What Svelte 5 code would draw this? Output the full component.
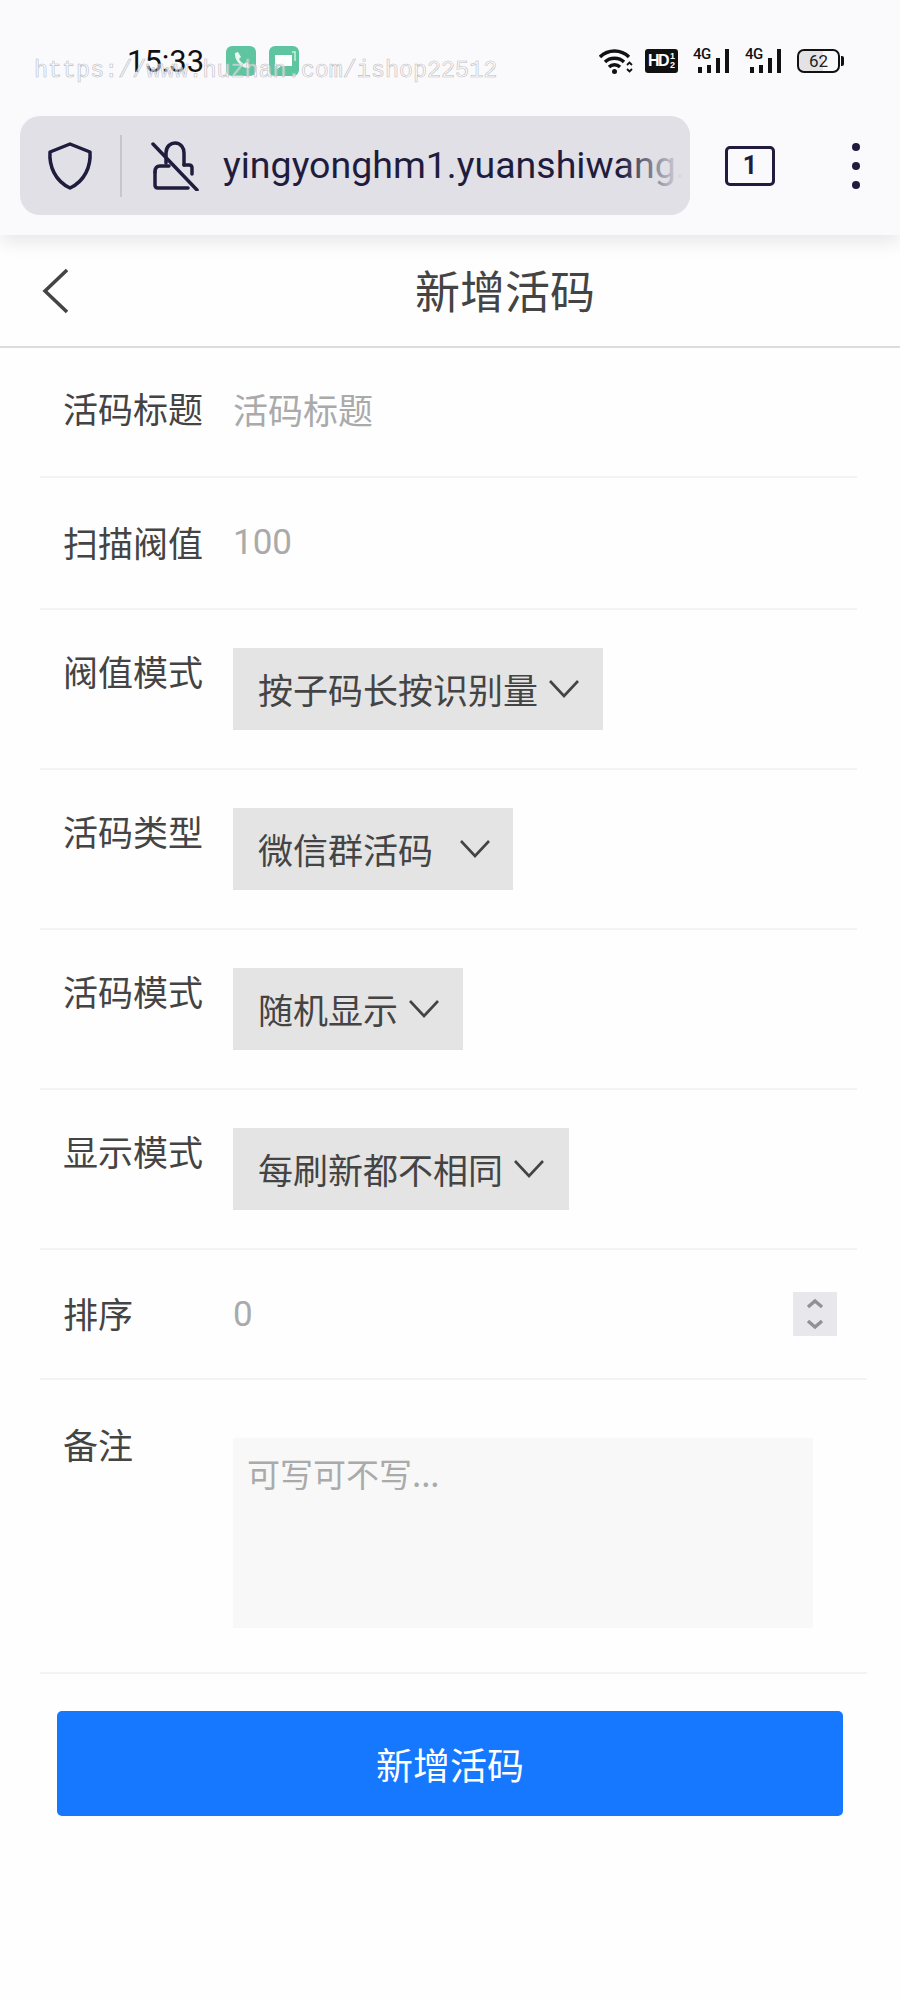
<script>
	const selects = [
		{ label: '阀值模式', value: '按子码长按识别量', width: 370, gap: 11 },
		{ label: '活码类型', value: '微信群活码', width: 280, gap: 27 },
		{ label: '活码模式', value: '随机显示', width: 230, gap: 11 },
		{ label: '显示模式', value: '每刷新都不相同', width: 336, gap: 11 }
	];
	const signals = [0, 1];
</script>

<div class="page">
	<div class="watermark">https://www.huzhan.com/ishop22512</div>

	<div class="browser">
		<div class="status">
			<span class="time">15:33</span>
			<svg class="app" viewBox="0 0 30 30">
				<rect width="30" height="30" rx="6" fill="#5fc5a0" />
				<path d="M9 7l3-1 3 5-2 2c1 2 3 4 5 5l2-2 4 3-1 3c-7 1-15-8-14-15z" fill="#e9f8f2" />
			</svg>
			<svg class="app second" viewBox="0 0 30 30">
				<rect width="30" height="30" rx="6" fill="#5fc5a0" />
				<path d="M6 9h17v11H12l-4 3v-3H6z" fill="#fff" />
				<path d="M23 6h3v9" fill="none" stroke="#c9efe0" stroke-width="1.5" />
			</svg>
			<div class="status-right">
				<svg class="wifi" viewBox="0 0 34 26" fill="none" stroke="#111" stroke-width="3.4">
					<path d="M1 9c8-8 21-8 29 0" />
					<path d="M6 14c5-5 14-5 19 0" />
					<path d="M10 19c3-3 8-3 11 0" />
					<circle cx="15.5" cy="23.5" r="2.5" fill="#111" stroke="none" />
					<path d="M28 17l2.500-2.500 2.500 2.500M28 21l2.500 2.500 2.500-2.500" stroke-width="1.8" />
				</svg>
				<span class="hd">HD<small>1<br />2</small></span>
				{#each signals as s}
					<span class="signal">
						<span class="net">4G</span>
						<svg viewBox="0 0 37 26" width="37" height="26" fill="#111">
							<rect x="5" y="19" width="4" height="6" />
							<rect x="14" y="17" width="4" height="8" />
							<rect x="23" y="10" width="4" height="15" />
							<rect x="32" y="1" width="4" height="24" />
						</svg>
					</span>
				{/each}
				<span class="battery"><span class="level">62</span></span>
			</div>
		</div>

		<div class="toolbar">
			<div class="urlbar">
				<svg class="shield" viewBox="0 0 46 50" fill="none" stroke="#1f1c3d" stroke-width="3.5" stroke-linejoin="round">
					<path d="M23 3l20 8c1 14-5 29-20 36C8 40 2 25 3 11z" />
				</svg>
				<span class="sep"></span>
				<svg class="lock" viewBox="0 0 48 50" fill="none" stroke="#1f1c3d" stroke-width="3.5" stroke-linejoin="round" stroke-linecap="round">
					<path d="M15 22V12C15 5 20 2 24 2c6 0 9 5 9 10v12" />
					<path d="M33 24h5c2 0 3 1 3 3v6" />
					<path d="M4 31v13c0 2 1 3 3 3h30" />
					<path d="M4 31c0-4 2-6 5-6h9" />
					<path d="M2 3l44 46" />
				</svg>
				<span class="url">yingyonghm1.yuanshiwang.</span>
			</div>
			<span class="tabs">1</span>
			<div class="dots"><i></i><i></i><i></i></div>
		</div>
	</div>

	<header>
		<svg class="back" viewBox="0 0 26 46" fill="none" stroke="#444" stroke-width="3.500">
			<path d="M25 2L3 23l22 21" />
		</svg>
		<h1>新增活码</h1>
	</header>

	<form on:submit|preventDefault>
		<div class="row text first">
			<span class="label">活码标题</span>
			<span class="hint">活码标题</span>
		</div>
		<div class="row text second-row">
			<span class="label">扫描阀值</span>
			<span class="hint num">100</span>
		</div>

		{#each selects as item}
			<div class="row pick">
				<span class="label">{item.label}</span>
				<div class="select" style="width: {item.width}px">
					<span>{item.value}</span>
					<svg viewBox="0 0 30 18" width="30" height="18" style="margin-left: {item.gap}px" fill="none" stroke="#444" stroke-width="2.6">
						<path d="M1 1l14 15L29 1" />
					</svg>
				</div>
			</div>
		{/each}

		<div class="row text order">
			<span class="label">排序</span>
			<span class="hint num">0</span>
			<div class="spin">
				<svg viewBox="0 0 44 44" width="44" height="44" fill="none" stroke="#909096" stroke-width="3.4">
					<path d="M15 15l7-6 7 6M15 29l7 6 7-6" />
				</svg>
			</div>
		</div>

		<div class="row notes">
			<span class="label">备注</span>
			<div class="textarea">可写可不写...</div>
		</div>

		<button type="submit">新增活码</button>
	</form>
</div>

<style>
	:global(body) {
		background: #fff;
	}

	.page {
		position: relative;
		height: 2000px;
		overflow: hidden;
		background: #fefefe;
		font-family: 'Noto Sans CJK SC', 'Noto Sans', sans-serif;
		color: #444;
	}

	.watermark {
		position: absolute;
		left: 34px;
		top: 56px;
		font: 23.4px/30px 'Liberation Mono', monospace;
		color: rgba(255, 255, 255, 0.5);
		-webkit-text-stroke: 0.6px #bebec2;
		white-space: nowrap;
	}

	.browser {
		height: 235px;
		background: #fafafd;
		box-shadow: 0 6px 18px rgba(0, 0, 0, 0.1);
	}

	.status {
		display: flex;
		align-items: center;
		height: 116px;
		box-sizing: border-box;
		padding: 6px 60px 0 127px;
	}

	.time {
		width: 99px;
		font: 31px/1 Roboto, sans-serif;
		color: #111;
	}

	.app {
		width: 30px;
		height: 30px;
	}

	.second {
		margin-left: 13px;
	}

	.status-right {
		display: flex;
		align-items: center;
		margin-left: auto;
	}

	.wifi {
		width: 34px;
		height: 26px;
	}

	.hd {
		display: flex;
		align-items: center;
		justify-content: center;
		width: 33px;
		height: 24px;
		margin-left: 12px;
		border-radius: 3px;
		background: #111;
		color: #fff;
		font: 700 16px/1 'Liberation Sans', sans-serif;
		letter-spacing: -1.5px;
	}

	.hd small {
		margin-left: 2px;
		font-size: 9px;
		line-height: 9px;
		letter-spacing: 0;
	}

	.signal {
		position: relative;
		display: block;
		width: 37px;
		height: 26px;
		margin-left: 15px;
	}

	.signal svg {
		display: block;
	}

	.net {
		position: absolute;
		left: 0;
		top: -1px;
		font: 500 15px/1 Roboto, sans-serif;
		letter-spacing: -0.5px;
		color: #111;
	}

	.battery {
		position: relative;
		display: block;
		width: 43px;
		height: 24px;
		margin-left: 15px;
		border: 2px solid #111;
		border-radius: 7px;
		box-sizing: border-box;
		background: linear-gradient(to right, #e3e3e6 62%, #fafafd 62%);
		text-align: center;
	}

	.battery::after {
		content: '';
		position: absolute;
		right: -6px;
		top: 5px;
		width: 3px;
		height: 10px;
		border-radius: 0 2px 2px 0;
		background: #111;
	}

	.level {
		display: block;
		font: 17px/20px Roboto, sans-serif;
		color: #222;
	}

	.toolbar {
		display: flex;
		align-items: center;
		height: 99px;
		padding-left: 20px;
	}

	.urlbar {
		position: relative;
		display: flex;
		align-items: center;
		flex: none;
		width: 670px;
		height: 99px;
		border-radius: 20px;
		background: #e0e0e6;
		overflow: hidden;
	}

	.urlbar::after {
		content: '';
		position: absolute;
		right: 0;
		top: 0;
		width: 70px;
		height: 100%;
		background: linear-gradient(to right, rgba(224, 224, 230, 0), #e0e0e6 90%);
	}

	.shield {
		flex: none;
		width: 46px;
		height: 50px;
		margin-left: 27px;
	}

	.sep {
		flex: none;
		width: 2px;
		height: 62px;
		margin-left: 27px;
		background: #c6c6cc;
	}

	.lock {
		flex: none;
		width: 48px;
		height: 50px;
		margin-left: 29px;
	}

	.url {
		margin-left: 24px;
		font: 37.5px/1 Roboto, sans-serif;
		color: #1f1c3d;
		white-space: nowrap;
	}

	.tabs {
		width: 50px;
		height: 40px;
		margin-left: 35px;
		box-sizing: border-box;
		border: 3px solid #1f1c3d;
		border-radius: 5px;
		text-align: center;
		font: 700 25px/34px Roboto, sans-serif;
		color: #1f1c3d;
	}

	.dots {
		display: flex;
		flex-direction: column;
		gap: 11px;
		margin-left: 77px;
	}

	.dots i {
		width: 8px;
		height: 8px;
		border-radius: 50%;
		background: #1f1c3d;
	}

	header {
		display: flex;
		align-items: center;
		height: 111px;
		border-bottom: 2px solid #dcdcdc;
	}

	.back {
		width: 26px;
		height: 46px;
		margin-left: 42px;
	}

	h1 {
		margin: 0 0 2px 347px;
		font-size: 45px;
		font-weight: 400;
		line-height: 1;
		color: #444;
	}

	.row {
		display: flex;
		box-sizing: border-box;
		margin: 0 43px 0 40px;
		padding-left: 23px;
		border-bottom: 2px solid #f3f3f3;
	}

	.label {
		flex: none;
		width: 170px;
		font-size: 35px;
		line-height: 56px;
		color: #444;
	}

	.text {
		align-items: center;
		height: 130px;
	}

	.first {
		padding-bottom: 8px;
	}

	.second-row {
		height: 132px;
		padding-bottom: 2px;
	}

	.hint {
		font-size: 35px;
		color: #aaa;
	}

	.num {
		font-family: Roboto, sans-serif;
	}

	.pick {
		height: 160px;
		padding-top: 38px;
	}

	.pick .label {
		margin-top: -5px;
	}

	.select {
		display: flex;
		align-items: center;
		box-sizing: border-box;
		height: 82px;
		padding-left: 25px;
		padding-bottom: 1px;
		background: #e4e4e4;
		font-size: 35px;
		color: #444;
	}

	.select svg {
		flex: none;
	}

	.order {
		justify-content: flex-start;
		margin-right: 33px;
	}

	.order .label {
		margin-top: -3px;
	}

	.spin {
		display: flex;
		margin-left: auto;
		margin-right: 30px;
		background: #e8e8ec;
	}

	.notes {
		height: 294px;
		margin-right: 33px;
		padding-top: 36px;
	}

	.textarea {
		width: 580px;
		height: 190px;
		box-sizing: border-box;
		margin-top: 22px;
		padding: 10px 14px;
		background: #f8f8f8;
		font-size: 33px;
		line-height: 50px;
		color: #aaa;
	}

	button {
		display: block;
		width: 786px;
		height: 105px;
		margin: 37px 0 0 57px;
		padding: 0;
		border: none;
		border-radius: 5px;
		background: #1677ff;
		color: #fff;
		font: inherit;
		font-size: 37px;
	}
</style>
